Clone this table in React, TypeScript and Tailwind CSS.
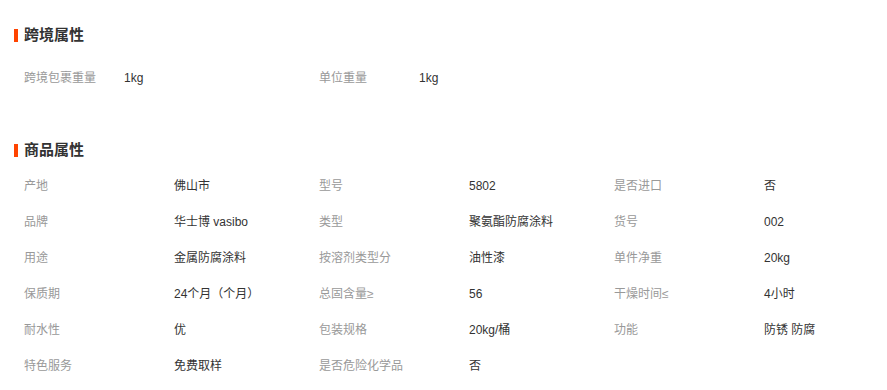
import React from "react";

const CROSS = [
  ["跨境包裹重量", "1kg"],
  ["单位重量", "1kg"],
];

const ATTRS = [
  ["产地", "佛山市"],
  ["型号", "5802"],
  ["是否进口", "否"],
  ["品牌", "华士博 vasibo"],
  ["类型", "聚氨酯防腐涂料"],
  ["货号", "002"],
  ["用途", "金属防腐涂料"],
  ["按溶剂类型分", "油性漆"],
  ["单件净重", "20kg"],
  ["保质期", "24个月（个月）"],
  ["总固含量≥", "56"],
  ["干燥时间≤", "4小时"],
  ["耐水性", "优"],
  ["包装规格", "20kg/桶"],
  ["功能", "防锈 防腐"],
  ["特色服务", "免费取样"],
  ["是否危险化学品", "否"],
];

const Title = ({ text }: { text: string }) => (
  <div className="flex items-center h-5 pl-[14px]">
    <span className="w-[4px] h-[13px] bg-[#ff4400] mr-[6px]" />
    <h3 className="text-[15px] font-bold text-[#333]">{text}</h3>
  </div>
);

export default function App() {
  return (
    <div
      className="w-[887px] h-[390px] bg-white overflow-hidden pt-[25px]"
      style={{ fontFamily: '"Liberation Sans", "Noto Sans CJK SC", sans-serif' }}
    >
      <Title text="跨境属性" />
      <div className="mt-[15px] pl-6 grid grid-cols-[295px_295px]">
        {CROSS.map(([k, v], i) => (
          <div key={i} className="flex items-center h-9 text-xs">
            <span className="w-[100px] text-[#999]">{k}</span>
            <span className="text-[#333]">{v}</span>
          </div>
        ))}
      </div>

      <div className="mt-[44px]">
        <Title text="商品属性" />
      </div>
      <div className="mt-[8px] pl-6 grid grid-cols-[295px_295px_250px]">
        {ATTRS.map(([k, v], i) => (
          <div key={i} className="flex items-center h-9 text-xs">
            <span className="w-[150px] text-[#999]">{k}</span>
            <span className="text-[#333]">{v}</span>
          </div>
        ))}
      </div>
    </div>
  );
}
